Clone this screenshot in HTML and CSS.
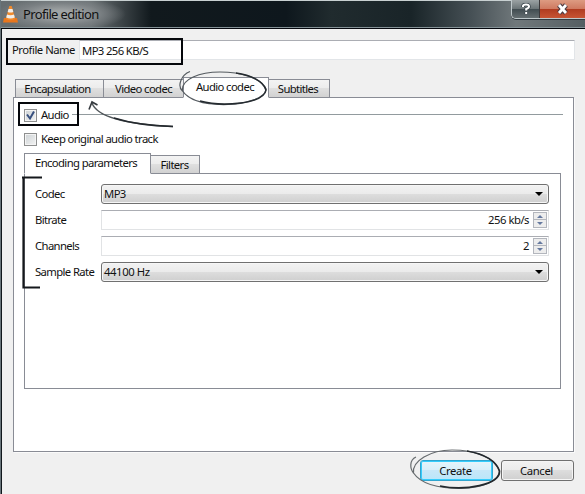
FILE: index.html
```html
<!DOCTYPE html>
<html lang="en">
<head>
<meta charset="utf-8">
<title>Profile edition</title>
<link rel="stylesheet" href="styles.css">
</head>
<body>
<div class="window">
  <header class="titlebar">
    <svg class="cone" width="15" height="18" viewBox="0 0 15 18">
      <path d="M1 13h13l1 4.500H0z" fill="#e9761d"/>
      <path d="M6.300 1h2.400l3.500 13q-4.700 2.500-9.400 0z" fill="#f08a2c"/>
      <path d="M5.500 4h4l.8 3q-2.800 1.200-5.600 0zM4 9.500q3.500 1.400 7 0l.8 3q-4.300 1.800-8.600 0z" fill="#f1eeea"/>
    </svg>
    <span class="title">Profile edition</span>
    <div class="controls">
      <div class="help"><svg width="10" height="12" viewBox="0 0 10 12"><path d="M2 4V3q0-1.500 3-1.500T8 3.500Q8 5 5.200 6v1.500M5.200 9v2" fill="none" stroke="#39434a" stroke-width="3.500"/><path d="M2 4V3q0-1.500 3-1.500T8 3.500Q8 5 5.200 6v1.500M5.200 9v2" fill="none" stroke="#fff" stroke-width="2"/></svg></div>
      <div class="close"><svg width="13" height="12" viewBox="0 0 13 12"><path d="M3 2l7 8M10 2l-7 8" stroke="#4b3b42" stroke-width="5"/><path d="M3 2l7 8M10 2l-7 8" stroke="#fff" stroke-width="2.800"/></svg></div>
    </div>
  </header>
  <main class="client">
    <div class="profile"><label class="t-profile">Profile Name</label><div class="name-input"><span class="t-name">MP3 256 KB/S</span></div></div>
    <nav class="tabs">
      <div class="tab encap"><span>Encapsulation</span></div>
      <div class="tab video"><span>Video codec</span></div>
      <div class="tab audio active"><span>Audio codec</span></div>
      <div class="tab subs"><span>Subtitles</span></div>
    </nav>
    <section class="pane">
      <div class="check-row group"><i class="box"><svg width="11" height="11" viewBox="0 0 11 11"><path d="M2 4.500l3 4L9 1.500" fill="none" stroke="#38507f" stroke-width="2"/></svg></i><span class="t-audio">Audio</span><i class="rule"></i></div>
      <div class="check-row keep"><i class="box"></i><span class="t-keep">Keep original audio track</span></div>
      <nav class="tabs inner-tabs">
        <div class="tab enc active"><span>Encoding parameters</span></div>
        <div class="tab filters"><span>Filters</span></div>
      </nav>
      <section class="params">
        <span>Codec</span><div class="combo"><span>MP3</span><i class="arrow"></i></div>
        <span>Bitrate</span><div class="spin"><span>256 kb/s</span><i class="step"><b></b><b class="down"></b></i></div>
        <span>Channels</span><div class="spin"><span>2</span><i class="step"><b></b><b class="down"></b></i></div>
        <span>Sample Rate</span><div class="combo"><span class="t-hz">44100 Hz</span><i class="arrow"></i></div>
      </section>
    </section>
    <footer class="actions"><div class="button primary"><span>Create</span></div><div class="button"><span>Cancel</span></div></footer>
  </main>
  <svg class="marks" width="585" height="494" viewBox="0 0 585 494" fill="none">
    <path d="M7 39H182V64H7zM19 103H78V125H19z" stroke="#05070b" stroke-width="2"/>
    <path d="M22 177.500H42M23.500 177.500V287.500H40" stroke="#15181c" stroke-width="2.200"/>
    <path d="M190 71.500C181 75 177 86 182.500 91C190 102 210 105 228 104.500C246 104 266 98 266 89C262 78 240 72 220 72C200 72 181 79 182.500 91" stroke="#555b60" stroke-width="1.200"/>
    <path d="M200 101C222 107 264 104 266 90C263 81 251 75 236 73" stroke="#252b30" stroke-width="1.600"/>
    <path d="M173 126.500C140 125 98 120 92 103" stroke="#50565a" stroke-width="1.400"/>
    <path d="M173 126.500C155 126 130 123 114 118" stroke="#24292e" stroke-width="1.600"/>
    <path d="M89 109.500L92 102L97.500 105" stroke="#353a3f" stroke-width="1.600"/>
    <path d="M416 457C409 460 410 469 413.500 473C421 484 440 488.500 461 488.500C482 488 500 481 499.500 471C495 457 474 450 452 450C430 450 412 461 413.500 473" stroke="#666b6e" stroke-width="1.200"/>
    <path d="M440 486C465 491 500 485 499.500 471C496 461 484 454 467 451" stroke="#22282d" stroke-width="1.700"/>
  </svg>
</div>
</body>
</html>
```
FILE: styles.css
```css
* { box-sizing: border-box; }
body { margin: 0; overflow: hidden; color: #111; font: 11.300px/14px "Noto Sans", "Open Sans", sans-serif; letter-spacing: -.62px; }
i, b { display: block; font-style: normal; }
span, label { white-space: nowrap; }
.window { position: relative; width: 585px; height: 494px; background: #f0f0f0; border-left: 1px solid #69757b; }
.titlebar { height: 29px; display: flex; align-items: flex-start; padding: 4px 0 0 2px; border-top: 1px solid #c8d0d1; border-bottom: 1px solid #05080e; box-shadow: inset 0 -1px #859297; background: radial-gradient(ellipse 65px 17px at 60px 13px, #a0a4a5 20%, #83888baa 65%, transparent), linear-gradient(90deg, #666d70 0, #697073 90px, #11191d 150px, #0e171d 285px, #202b2e 330px, #192428 410px, #465055 470px, #70787b 515px, #555e62 585px); }
.cone { flex: none; }
.title { font-size: 13px; line-height: 18px; margin-left: 5px; letter-spacing: -.65px; }
.controls { display: flex; width: 74px; height: 19px; margin: -5px 0 0 auto; border: 1px solid #bfc8cb; border-width: 0 0 1px 1px; border-radius: 0 0 0 5px; box-shadow: 0 1px #333c42; }
.help, .close { display: flex; justify-content: center; align-items: center; }
.help { width: 28px; background: linear-gradient(#9ba2a4, #6c7578 48%, #404b50 50%, #656e71); border-radius: 0 0 0 4px; border-right: 1px solid #3c393c; }
.close { flex: 1; background: linear-gradient(#dd9b82, #cf7a61 48%, #af3b20 50%, #c75434); }
.client { height: 465px; border-left: 1px solid #10171c; padding: 11px 10px 0 10px; }
.profile { display: flex; height: 20px; align-items: center; width: 563px; }
.t-profile { width: 67px; letter-spacing: -.5px; }
.t-name { letter-spacing: -.62px; }
.name-input { flex: 1; height: 20px; background: #fff; border: 1px solid #e2e5e8; border-top-color: #abadb3; padding: 3px 2px; border-radius: 1px; }
.tabs { display: flex; align-items: flex-end; }
.client > .tabs { height: 21px; margin: 17px 0 -1px 3px; position: relative; }
.tab { height: 19px; border: 1px solid #898c95; background: linear-gradient(#f3f3f3, #ececec 48%, #dfdfdf 50%, #d2d2d2); display: flex; justify-content: center; align-items: center; margin-right: -1px; }
.tab.active { height: 21px; background: #fff; border-bottom-color: #fff; z-index: 1; padding-bottom: 1px; }
.encap { width: 89px; padding-right: 4px; }.video { width: 81px; }
.audio { width: 86px; padding-right: 2px; }.subs { width: 62px; padding-right: 2px; }
.pane { width: 561px; height: 355px; margin-left: 1px; border: 1px solid #898c95; background: #fff; padding: 10px 10px; box-shadow: 1px 1px #fafafa; }
.check-row { display: flex; align-items: center; height: 14px; }
.check-row span { margin-left: 4px; }
.box { width: 13px; height: 13px; border: 1px solid #8e8f8f; background: linear-gradient(135deg, #cdd2d5, #f3f3f3); box-shadow: inset 0 0 0 1px #f4f4f4; flex: none; }
.box svg { display: block; }
.rule { height: 1px; flex: 1; background: #929b9e; margin: 0 0 1px 3px; }
.keep { margin-top: 10px; }
.inner-tabs { height: 21px; margin: 7px 0 -1px; position: relative; }
.enc { width: 127px; padding-right: 3px; }.filters { width: 50px; padding-right: 1px; }
.params { width: 537px; height: 216px; border: 1px solid #898c95; padding: 10px 10px; display: grid; grid-template-columns: 66px 448px; grid-auto-rows: 20px; row-gap: 6px; align-content: start; align-items: center; }
.combo { height: 20px; border: 1px solid #707070; border-radius: 3px; background: linear-gradient(#f2f2f2, #ebebeb 48%, #dddddd 50%, #cfcfcf); display: flex; align-items: center; justify-content: space-between; padding: 0 5px 0 2px; box-shadow: inset 0 0 0 1px #f6f6f6; }
.t-hz { letter-spacing: -.4px; }
.arrow { border: 4px solid transparent; border-top-color: #000; border-bottom: 0; }
.spin { height: 20px; border: 1px solid #e1e3e5; border-top-color: #abadb3; background: #fff; display: flex; align-items: center; justify-content: flex-end; padding-right: 1px; gap: 4px; letter-spacing: -.5px; }
.step { width: 14px; height: 16px; border: 1px solid #b3b6bd; display: flex; flex-direction: column; align-items: center; justify-content: space-around; background: linear-gradient(#ededed 46%, #b3b6bd 46%, #b3b6bd 53%, #ededed 53%); }
.step b { border: 3px solid transparent; border-bottom-color: #65799f; border-top: 0; }
.step .down { border-top: 3px solid #65799f; border-bottom: 0; }
.actions { display: flex; justify-content: flex-end; gap: 8px; width: 562px; margin-top: 8px; }
.button { width: 73px; height: 21px; border: 1px solid #707070; border-radius: 3px; background: linear-gradient(#f2f2f2, #ebebeb 48%, #dddddd 50%, #cfcfcf); box-shadow: inset 0 0 0 1px #f5f5f5; display: flex; align-items: center; justify-content: center; letter-spacing: -.4px; padding-right: 2px; }
.primary { border-color: #30a5cf; box-shadow: inset 0 0 0 1px #35ccfc; background: linear-gradient(#e6f5fb, #d8effa 48%, #c7e7f8 50%, #b9e6fa); }
.marks { position: absolute; left: -1px; top: 0; pointer-events: none; z-index: 3; }
```
